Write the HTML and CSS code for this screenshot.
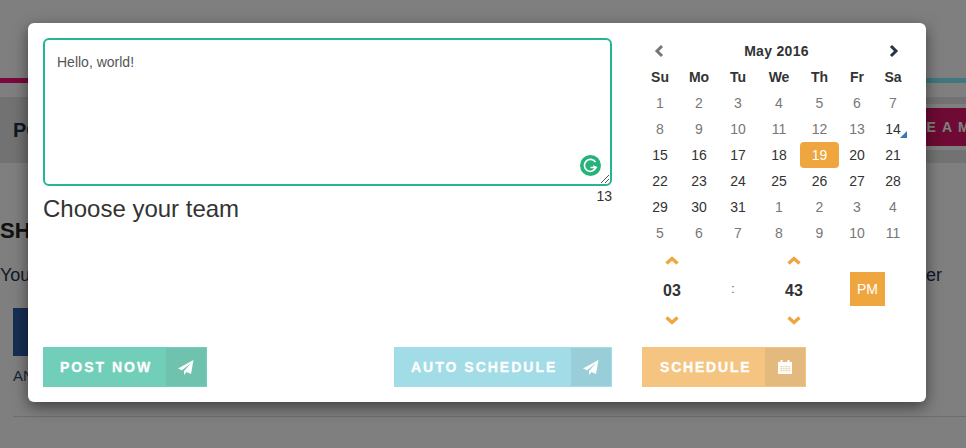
FILE: index.html
```html
<!doctype html>
<html lang="en">
<head>
    <meta charset="UTF-8">
    <title>Choose your team</title>
    <link rel="stylesheet" href="styles.css">
</head>
<body>
<div class="page">
    <div class="top-line"></div>
    <div class="band">
        <span class="band-title">PO</span>
        <div class="band-right">
            <span class="band-btn">TEAM</span>
        </div>
    </div>
    <div class="content">
        <h2 class="page-head">SH</h2>
        <p class="page-text"><span>You</span><span>er</span></p>
        <div class="thumb"></div>
        <p class="thumb-name">AN</p>
        <div class="page-rule"></div>
    </div>
</div>
<div class="backdrop"></div>
<div class="modal">
    <div class="modal-main">
        <div class="left-col">
            <div class="editor">
                <p class="editor-text">Hello, world!</p>
                <svg class="g-icon" width="21" height="21" viewBox="0 0 21 21">
                    <circle cx="10.5" cy="10.5" r="10.5" fill="#26b37a"/>
                    <path d="M15.5 7.2A6 6 0 1 0 16 12.5H10.5" fill="none" stroke="#fff" stroke-width="1.6"/>
                    <path d="M13 15.3l3.2-2.8-3.2-1.7" fill="none" stroke="#fff" stroke-width="1.3"/>
                </svg>
                <svg class="grip" width="10" height="10" viewBox="0 0 10 10">
                    <path d="M1 9L9 1M5 9L9 5" stroke="#555" stroke-width="1"/>
                </svg>
            </div>
            <div class="counter">13</div>
            <h3 class="team-title">Choose your team</h3>
        </div>
        <div class="right-col">
            <div class="cal-head">
                <svg class="cal-arrow" width="12" height="14" viewBox="0 0 12 14"><path d="M9 2L4 7l5 5" fill="none" stroke="#777" stroke-width="3"/></svg>
                <span class="cal-month">May 2016</span>
                <svg class="cal-arrow" width="12" height="14" viewBox="0 0 12 14"><path d="M3 2l5 5-5 5" fill="none" stroke="#2b3344" stroke-width="3"/></svg>
            </div>
            <table class="cal">
                <tr><th>Su</th><th>Mo</th><th>Tu</th><th>We</th><th>Th</th><th>Fr</th><th>Sa</th></tr>
                <tr class="past"><td>1</td><td>2</td><td>3</td><td>4</td><td>5</td><td>6</td><td>7</td></tr>
                <tr class="past"><td>8</td><td>9</td><td>10</td><td>11</td><td>12</td><td>13</td><td class="today">14</td></tr>
                <tr><td>15</td><td>16</td><td>17</td><td>18</td><td class="active">19</td><td>20</td><td>21</td></tr>
                <tr><td>22</td><td>23</td><td>24</td><td>25</td><td>26</td><td>27</td><td>28</td></tr>
                <tr><td>29</td><td>30</td><td>31</td><td class="old">1</td><td class="old">2</td><td class="old">3</td><td class="old">4</td></tr>
                <tr class="past"><td>5</td><td>6</td><td>7</td><td>8</td><td>9</td><td>10</td><td>11</td></tr>
            </table>
            <div class="time">
                <div class="time-unit">
                    <svg width="14" height="9" viewBox="0 0 14 9"><path d="M1.5 7.5L7 2.5l5.500 5" fill="none" stroke="#f0a63f" stroke-width="3.4"/></svg>
                    <span class="time-num">03</span>
                    <svg width="14" height="9" viewBox="0 0 14 9"><path d="M1.500 1.500L7 6.500l5.500-5" fill="none" stroke="#f0a63f" stroke-width="3.4"/></svg>
                </div>
                <span class="time-sep">:</span>
                <div class="time-unit">
                    <svg width="14" height="9" viewBox="0 0 14 9"><path d="M1.5 7.5L7 2.5l5.500 5" fill="none" stroke="#f0a63f" stroke-width="3.4"/></svg>
                    <span class="time-num">43</span>
                    <svg width="14" height="9" viewBox="0 0 14 9"><path d="M1.500 1.500L7 6.500l5.500-5" fill="none" stroke="#f0a63f" stroke-width="3.4"/></svg>
                </div>
                <span class="ampm">PM</span>
            </div>
        </div>
    </div>
    <div class="modal-foot">
        <a class="act act-post"><span class="act-label">POST NOW</span><span class="act-icon"><svg width="16" height="15" viewBox="0 0 16 15"><path d="M15.500 0L0 8.500l4 1.800L13 3 6 11v4l2.500-3 4.500 2z" fill="#fff"/></svg></span></a>
        <a class="act act-auto"><span class="act-label">AUTO SCHEDULE</span><span class="act-icon"><svg width="16" height="15" viewBox="0 0 16 15"><path d="M15.500 0L0 8.500l4 1.800L13 3 6 11v4l2.500-3 4.500 2z" fill="#fff"/></svg></span></a>
        <a class="act act-sched"><span class="act-label">SCHEDULE</span><span class="act-icon"><svg width="14" height="14" viewBox="0 0 14 14"><path d="M0 2h2.500V0h2v2h5V0h2v2H14v12H0z" fill="#fff"/><path d="M1.500 6.500h11M1.500 8.500h11M1.500 10.500h11M3.500 5.500v7M6 5.500v7M8.500 5.500v7M11 5.500v7" stroke="#e9bd80" stroke-width=".6" fill="none"/></svg></span></a>
    </div>
</div>
</body>
</html>
```

FILE: styles.css
```css
*{
    box-sizing: border-box;
}
body{
    margin: 0;
    width: 966px;
    height: 448px;
    overflow: hidden;
    background-color: #fff;
    font-family: "Liberation Sans", Arial, sans-serif;
    color: #333;
}
p, h2, h3{
    margin: 0;
}

/* page behind the modal */
.page{
    height: 448px;
    padding-top: 78px;
}
.top-line{
    height: 5px;
    background: linear-gradient(to right, #f5107c 0, #f5107c 50%, #80f0ff 50%, #80f0ff 100%);
}
.band{
    height: 66px;
    margin-top: 14px;
    padding-left: 13px;
    background-color: #e4e4e4;
    display: flex;
    justify-content: space-between;
}
.band-title{
    font-size: 20px;
    font-weight: bold;
    line-height: 66px;
    color: #222d40;
}
.band-right{
    width: 86px;
    height: 46px;
    margin-top: 7px;
    padding: 4px 0;
    background-color: #fff;
}
.band-btn{
    display: block;
    height: 38px;
    line-height: 38px;
    padding-left: 32px;
    background-color: #dc1466;
    color: #fff;
    font-size: 14px;
    font-weight: bold;
    letter-spacing: 6px;
    white-space: nowrap;
    overflow: hidden;
}
.content{
    padding: 0 0 0 13px;
}
.page-head{
    margin: 55px 0 0 -13px;
    font-size: 22px;
    line-height: 26px;
    color: #222;
}
.page-text{
    display: flex;
    justify-content: space-between;
    margin: 21px 24px 0 -13px;
    font-size: 18px;
    line-height: 20px;
    color: #23344f;
}
.thumb{
    width: 40px;
    height: 48px;
    margin-top: 23px;
    background-color: #2f5da8;
}
.thumb-name{
    margin-top: 12px;
    font-size: 15px;
    line-height: 16px;
    color: #2f4a7e;
}
.page-rule{
    height: 1px;
    margin-top: 32px;
    background-color: #ddd;
}
.backdrop{
    position: absolute;
    top: 0;
    left: 0;
    right: 0;
    bottom: 0;
    background-color: rgba(0,0,0,.5);
}

/* modal */
.modal{
    position: absolute;
    top: 23px;
    left: 28px;
    width: 898px;
    height: 379px;
    padding: 15px;
    display: flex;
    flex-direction: column;
    justify-content: space-between;
    background-color: #fff;
    border-radius: 6px;
    box-shadow: 0 5px 15px rgba(0,0,0,.5);
}
.modal-main{
    display: flex;
}
.left-col{
    width: 569px;
}
.editor{
    position: relative;
    height: 148px;
    padding: 14px 12px;
    border: 2px solid #26b594;
    border-radius: 6px;
}
.editor-text{
    font-size: 14px;
    line-height: 17px;
    color: #555;
}
.g-icon{
    position: absolute;
    right: 9px;
    bottom: 8px;
}
.grip{
    position: absolute;
    right: 0;
    bottom: 0;
}
.counter{
    font-size: 14px;
    line-height: 20px;
    text-align: right;
    color: #333;
}
.team-title{
    margin-top: -14px;
    font-size: 24px;
    font-weight: normal;
    line-height: 33px;
    color: #333;
}

/* calendar */
.right-col{
    width: 266px;
    margin-left: 30px;
    margin-top: 3px;
}
.cal-head{
    display: flex;
    align-items: center;
    justify-content: space-between;
    height: 20px;
    padding: 0 8px 0 11px;
}
.cal-month{
    font-size: 14px;
    font-weight: bold;
    letter-spacing: .3px;
    color: #333;
}
.cal{
    width: 271px;
    margin: 3px 0 0 -2px;
    border-collapse: collapse;
    table-layout: fixed;
    font-size: 14px;
}
.cal th{
    height: 26px;
    padding: 0;
    font-weight: bold;
    color: #333;
}
.cal th:nth-child(1){ width: 40px; }
.cal th:nth-child(2){ width: 38px; }
.cal th:nth-child(3){ width: 40px; }
.cal th:nth-child(4){ width: 42px; }
.cal th:nth-child(5){ width: 39px; }
.cal th:nth-child(6){ width: 36px; }
.cal th:nth-child(7){ width: 36px; }
.cal td{
    height: 26px;
    padding: 0;
    text-align: center;
    color: #333;
}
.cal .past td, .cal td.old{
    color: #777;
}
.cal .past td.today{
    position: relative;
    color: #333;
}
.cal td.today:after{
    content: "";
    position: absolute;
    right: 4px;
    bottom: 4px;
    border-left: 7px solid transparent;
    border-bottom: 7px solid #337ab7;
}
.cal td.active{
    background-color: #f0a63f;
    color: #fff;
    border-radius: 4px;
}

/* time picker */
.time{
    display: flex;
    align-items: center;
    margin: 5px 0 0 -1px;
}
.time-unit{
    width: 62px;
    height: 76px;
    display: flex;
    flex-direction: column;
    align-items: center;
    justify-content: space-between;
    padding: 5px 0 2px;
}
.time-num{
    font-size: 16px;
    font-weight: bold;
    color: #333;
}
.time-sep{
    width: 60px;
    text-align: center;
    font-size: 12px;
    color: #555;
}
.ampm{
    width: 35px;
    height: 34px;
    line-height: 34px;
    margin-left: 25px;
    text-align: center;
    font-size: 14px;
    color: #fff;
    background-color: #f0a63f;
}

/* bottom buttons */
.modal-foot{
    display: flex;
}
.act{
    height: 40px;
    display: flex;
    justify-content: space-between;
    color: #fff;
    font-size: 14px;
    font-weight: bold;
    letter-spacing: 2px;
    -webkit-text-stroke: .3px #fff;
    line-height: 40px;
    opacity: .65;
}
.act-label{
    padding-left: 17px;
}
.act-icon{
    width: 40px;
    height: 38px;
    margin: 1px;
    display: flex;
    align-items: center;
    justify-content: center;
    background-color: rgba(0,0,0,.1);
}
.act-post{
    width: 164px;
    background-color: #26b594;
}
.act-auto{
    width: 218px;
    margin-left: 187px;
    background-color: #6fcadb;
}
.act-sched{
    width: 164px;
    margin-left: 30px;
    background-color: #f0a63f;
}
.act-sched .act-label{
    padding-left: 18px;
    letter-spacing: 1.8px;
}
```
